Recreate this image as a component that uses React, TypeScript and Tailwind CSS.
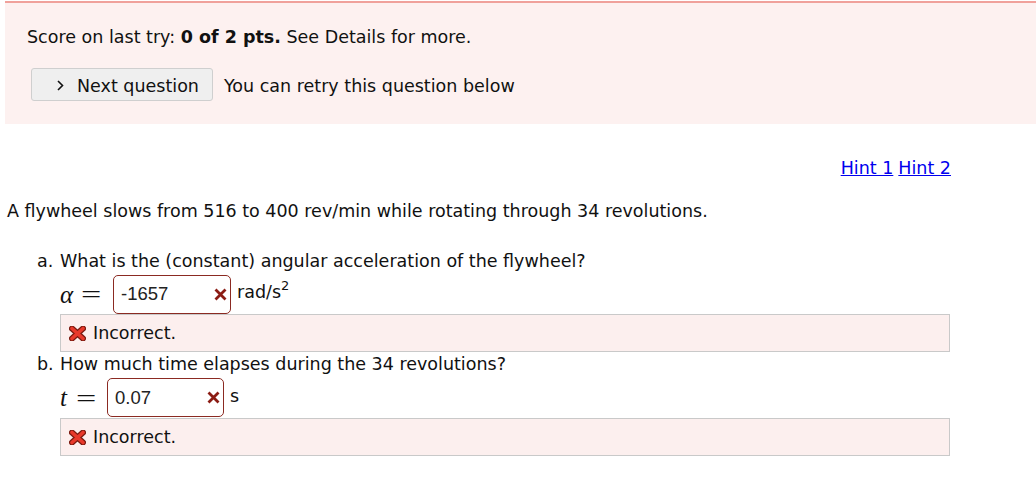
import React from 'react';

const BigX = () => (
  <svg width="17" height="15" viewBox="0 0 17 15" className="shrink-0">
    <path d="M3 2.5 L14 12.5 M14 2.5 L3 12.5" stroke="#7a1a10" strokeWidth="6" strokeLinecap="round" />
    <path d="M3 2.5 L14 12.5 M14 2.5 L3 12.5" stroke="#e8392b" strokeWidth="3.6" strokeLinecap="round" />
  </svg>
);

const SmallX = () => (
  <svg width="13" height="13" viewBox="0 0 13 13" className="shrink-0">
    <path d="M1.5 1.5 L11.5 11.5 M11.5 1.5 L1.5 11.5" stroke="#8b1c14" strokeWidth="2.8" />
  </svg>
);

const AnswerBox = ({ value, width }: { value: string; width: string }) => (
  <div className={`flex items-center justify-between h-[39px] ${width} border border-[#8b2a22] rounded-[5px] pl-[7px] pr-[3px] bg-white`}>
    <span className="text-[18.5px] text-[#222]" style={{ fontFamily: '"Liberation Sans", Arial, sans-serif' }}>{value}</span>
    <SmallX />
  </div>
);

const Incorrect = () => (
  <div className="flex items-center gap-[7px] w-[890px] h-[38px] bg-[#fcefee] border border-[#c9c9c9] pl-[8px]">
    <BigX />
    <span className="pt-[1px]">Incorrect.</span>
  </div>
);

const serif = { fontFamily: '"Liberation Serif", "DejaVu Serif", serif' };

export default function App() {
  return (
    <div className="bg-white min-h-screen pt-px text-[17.5px] text-[#111]" style={{ fontFamily: '"DejaVu Sans", sans-serif' }}>
      <div className="ml-[5px] border-t-2 border-[#f0a19b] bg-[#fdf1f0] pl-[22px] pt-[22px] pb-[23px]">
        <div className="h-[24px] leading-[24px]">
          Score on last try: <b className="font-bold">0 of 2 pts.</b> See Details for more.
        </div>
        <div className="flex items-center mt-[19px]">
          <button className="flex items-center h-[33px] w-[182px] ml-[4px] bg-[#efefef] border border-[#cfcfcf] rounded-[3px] pl-[25px]">
            <svg width="7" height="11" viewBox="0 0 7 11" className="mr-[13px] mt-[1px]">
              <path d="M1 1 L5.5 5.5 L1 10" fill="none" stroke="#111" strokeWidth="1.6" />
            </svg>
            <span className="whitespace-nowrap pt-[3px]">Next question</span>
          </button>
          <span className="ml-[11px] pt-[3px]">You can retry this question below</span>
        </div>
      </div>

      <div className="w-[951px] pl-[7px]">
        <div className="flex justify-end gap-[5px] mt-[32px] h-[24px] leading-[24px]">
          <a href="#" className="text-[#0000ee] underline">Hint 1</a>
          <a href="#" className="text-[#0000ee] underline">Hint 2</a>
        </div>
        <p className="mt-[19px] h-[24px] leading-[24px]">
          A flywheel slows from 516 to 400 rev/min while rotating through 34 revolutions.
        </p>

        <div className="mt-[26px]">
          <div className="flex h-[24px] leading-[24px]">
            <span className="w-[23px] pl-[30px] box-content">a.</span>
            <span>What is the (constant) angular acceleration of the flywheel?</span>
          </div>
          <div className="pl-[53px]">
            <div className="flex items-center h-[41px] pt-[1px]">
              <span className="flex items-center w-[53px] leading-none" style={serif}>
                <i className="text-[25px]">α</i>
                <span className="ml-[8px] text-[24px] inline-block scale-x-150 origin-left">=</span>
              </span>
              <AnswerBox value="-1657" width="w-[118px]" />
              <span className="ml-[6px] -mt-[3px]">rad/s<sup className="text-[13px] relative -top-[8px]">2</sup></span>
            </div>
            <Incorrect />
          </div>
        </div>

        <div>
          <div className="flex h-[24px] leading-[24px]">
            <span className="w-[23px] pl-[30px] box-content">b.</span>
            <span>How much time elapses during the 34 revolutions?</span>
          </div>
          <div className="pl-[53px]">
            <div className="flex items-center h-[42px] pt-[1px]">
              <span className="flex items-center w-[47px] leading-none" style={serif}>
                <i className="text-[25px]">t</i>
                <span className="ml-[9px] text-[24px] inline-block scale-x-150 origin-left">=</span>
              </span>
              <AnswerBox value="0.07" width="w-[117px]" />
              <span className="ml-[6px] -mt-[3px]">s</span>
            </div>
            <Incorrect />
          </div>
        </div>
      </div>
    </div>
  );
}
